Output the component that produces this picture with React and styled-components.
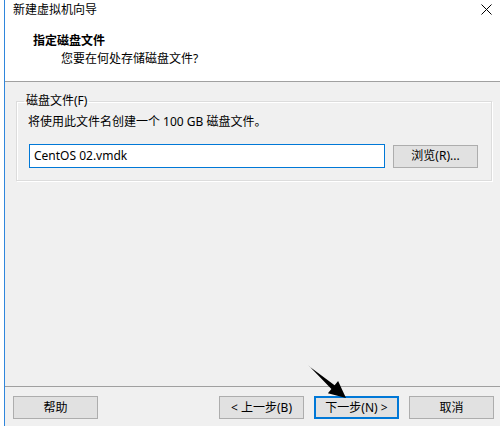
import React from "react";
import styled, { createGlobalStyle } from "styled-components";

const Global = createGlobalStyle`
  html, body { margin: 0; padding: 0; background: #ffffff; }
  body { font-family: "Noto Sans", "Noto Sans CJK SC", sans-serif; font-size: 12px; color: #000; }
  * { box-sizing: border-box; }
`;

const Page = styled.div`
  position: relative;
  width: 500px;
  height: 426px;
  overflow: hidden;
  background: #ffffff;
  padding-left: 4px;
`;

const Window = styled.div`
  display: flex;
  flex-direction: column;
  height: 426px;
  border-left: 1px solid #2f86dc;
  background: #f0f0f0;
`;

const Header = styled.header`
  height: 82px;
  background: #ffffff;
  border-bottom: 1px solid #a0a0a0;
  display: flex;
  flex-direction: column;
`;

const TitleBar = styled.div`
  height: 20px;
  display: flex;
  align-items: center;
  justify-content: space-between;
  padding: 0 8px 0 8px;
`;

const Title = styled.span`
  font-size: 12px;
  line-height: 20px;
`;

const CloseIcon = styled.svg`
  width: 11px;
  height: 11px;
  display: block;
  margin-top: -2px;
`;

const HeaderText = styled.div`
  padding: 12px 0 0 28px;
  display: flex;
  flex-direction: column;
`;

const Heading = styled.div`
  font-weight: bold;
  line-height: 18px;
`;

const Subtitle = styled.div`
  line-height: 18px;
  padding-left: 28px;
`;

const Body = styled.main`
  flex: 1;
  padding: 12px 9px 0 11px;
`;

const Group = styled.fieldset`
  margin: 0;
  border: 1px solid #dcdcdc;
  box-shadow: 1px 1px 0 #ffffff inset, 1px 1px 0 #ffffff;
  padding: 0 13px 12px 11px;
`;

const Legend = styled.legend`
  padding: 0 2px;
  margin-left: -4px;
  line-height: 14px;
`;

const Hint = styled.div`
  line-height: 18px;
  margin-top: 5px;
`;

const FileRow = styled.div`
  display: flex;
  align-items: center;
  gap: 8px;
  margin-top: 13px;
  padding-left: 1px;
`;

const FileInput = styled.div`
  width: 356px;
  height: 24px;
  border: 1px solid #0078d7;
  background: #ffffff;
  padding-left: 4px;
  display: flex;
  align-items: center;
  line-height: 20px;
`;

const Button = styled.button`
  width: ${(p) => p.$w || 85}px;
  height: 23px;
  margin: 0;
  padding: 0;
  font: inherit;
  font-size: 12px;
  color: #000;
  background: #e1e1e1;
  border: ${(p) => (p.$focus ? "2px solid #0078d7" : "1px solid #adadad")};
  display: flex;
  align-items: center;
  justify-content: center;
  line-height: 18px;
`;

const Footer = styled.footer`
  height: 40px;
  border-top: 1px solid #a0a0a0;
  display: flex;
  align-items: flex-start;
  padding: 9px 6px 0 8px;
  gap: 10px;
`;

const Spacer = styled.div`
  flex: 1;
`;

const ArrowLayer = styled.svg`
  position: absolute;
  left: 0;
  top: 0;
  width: 500px;
  height: 426px;
  pointer-events: none;
`;

export default function App() {
  return (
    <Page>
      <Global />
      <Window>
        <Header>
          <TitleBar>
            <Title>新建虚拟机向导</Title>
            <CloseIcon viewBox="0 0 11 11">
              <path d="M0.5 0.5 L10.5 10.5 M10.5 0.5 L0.5 10.5" stroke="#000" strokeWidth="1" fill="none" />
            </CloseIcon>
          </TitleBar>
          <HeaderText>
            <Heading>指定磁盘文件</Heading>
            <Subtitle>您要在何处存储磁盘文件?</Subtitle>
          </HeaderText>
        </Header>
        <Body>
          <Group>
            <Legend>磁盘文件(F)</Legend>
            <Hint>将使用此文件名创建一个 100 GB 磁盘文件。</Hint>
            <FileRow>
              <FileInput>CentOS 02.vmdk</FileInput>
              <Button>浏览(R)...</Button>
            </FileRow>
          </Group>
        </Body>
        <Footer>
          <Button>帮助</Button>
          <Spacer />
          <Button>&lt; 上一步(B)</Button>
          <Button $focus>下一步(N) &gt;</Button>
          <Button>取消</Button>
        </Footer>
      </Window>
      <ArrowLayer viewBox="0 0 500 426">
        <polygon
          points="308.6,365.5 309.4,366.5 334.6,385.2 338.1,381 346,398 327.9,393.2 331.4,389"
          fill="#000"
        />
      </ArrowLayer>
    </Page>
  );
}
